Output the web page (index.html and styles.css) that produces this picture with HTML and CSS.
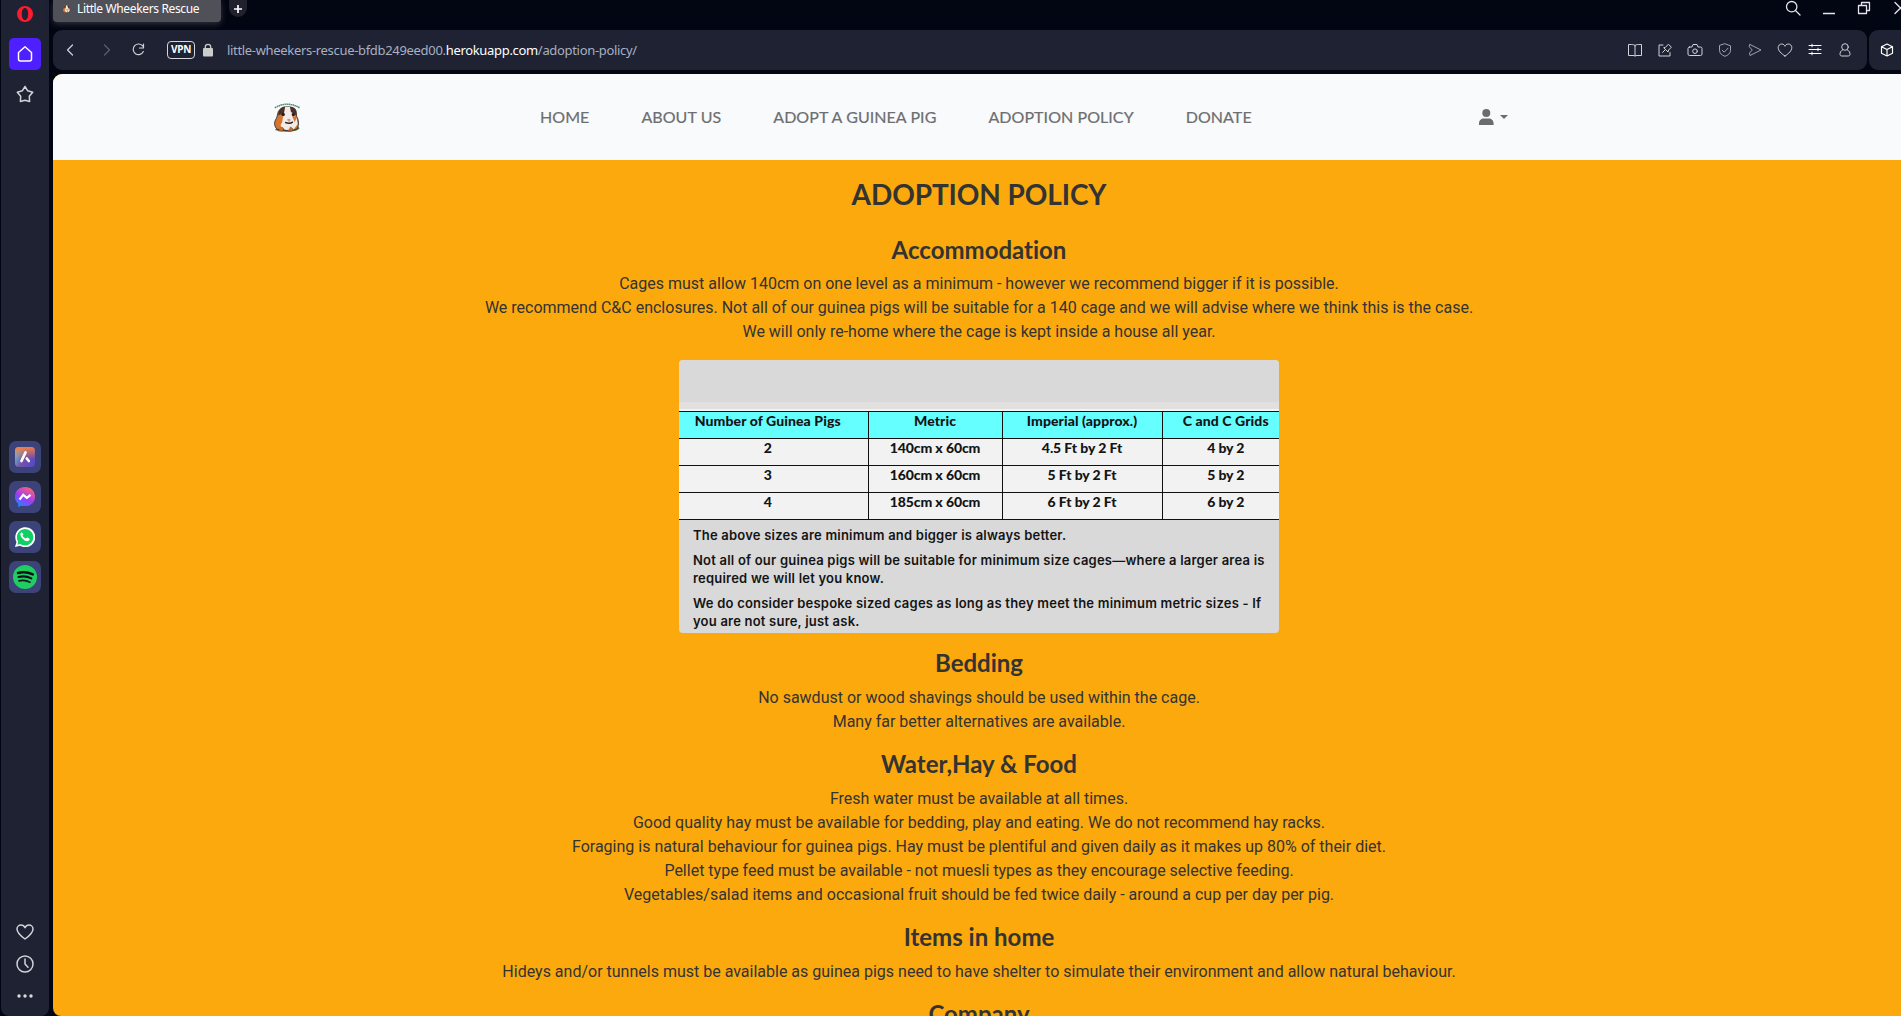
FILE: index.html
```html
<!DOCTYPE html>
<html lang="en">
<head>
<meta charset="utf-8">
<title>Little Wheekers Rescue</title>
<link rel="stylesheet" href="styles.css">
</head>
<body>
<svg class="defs" width="0" height="0">
  <defs>
    <linearGradient id="aria" x1="0" y1="0.3" x2="1" y2="0.8"><stop offset="0" stop-color="#62c4dc"/><stop offset=".45" stop-color="#7553a5"/><stop offset="1" stop-color="#5548c8"/></linearGradient>
    <linearGradient id="ariaTop" x1="0" y1="0" x2="0" y2="1"><stop offset="0" stop-color="#f47b45"/><stop offset=".6" stop-color="#f47b45" stop-opacity="0"/></linearGradient>
    <linearGradient id="msg" x1="0.2" y1="1" x2="0.75" y2="0"><stop offset="0" stop-color="#168bff"/><stop offset=".45" stop-color="#9a3cf5"/><stop offset="1" stop-color="#ff6370"/></linearGradient>
    <symbol id="pig" viewBox="0 0 28 32">
      <path d="M2 28c4-4 8-3 12-2l8-4 5 5c-2 4-18 5-25 2z" fill="#476f43"/>
      <path d="M5 10c-1 3-1 5-2 7-3 4-2 9 1 11 6 2 15 2 20 0 3-4 2-10 0-13-1-3-1-7-4-9-4-2-12-2-15 4z" fill="#cf7636" stroke="#3b2c28" stroke-width=".9"/>
      <path d="M12 5h6l1 7 5 5 1 6-4 5-8 1-5-3-2-7 4-7z" fill="#f1ece8"/>
      <path d="M5 11c1-4 4-6 7-6l-1 6-6 3zM17 5c5 0 8 3 7 9l-6-4z" fill="#4a3129"/>
      <path d="m6 14 4 1-1 6-3 5-3-4zM19 14l5 2-2 5z" fill="#d9752e"/>
      <circle cx="10" cy="13" r="1.800" fill="#211e21"/><circle cx="20.500" cy="13" r="1.600" fill="#211e21"/>
      <path d="M14 18q2-1.500 4 0l-1 2h-2z" fill="#c99b92"/>
      <path d="M12 21q5 2 8-.5" fill="none" stroke="#292326" stroke-width="1.400"/>
      <path d="M8 26c3 0 3 3 1 4H5M17 26c3 0 4 3 2 4h-4" fill="#c96b31" stroke="#55352a" stroke-width=".5"/>
      <path d="M1.500 6Q14-1.500 27 6" fill="none" stroke="#438567" stroke-width="1.600" stroke-dasharray="1.500 .6"/>
    </symbol>
  </defs>
</svg>
<div class="browser">
  <aside class="sidebar">
    <svg class="opera" width="18" height="18" viewBox="0 0 18 18"><path fill-rule="evenodd" d="M9 1a8 8 0 1 0 0 16A8 8 0 0 0 9 1zm0 2c2 0 3.200 2.600 3.200 6S11 15 9 15 5.800 12.400 5.800 9 7 3 9 3z" fill="#ff1b2d"/></svg>
    <div class="home"><svg class="line" width="18" height="18" viewBox="0 0 18 18"><path d="M2.500 7.500 9 1.800l6.500 5.700v6.500a2 2 0 0 1-2 2h-9a2 2 0 0 1-2-2z"/></svg></div>
    <svg class="line star" width="20" height="20" viewBox="0 0 20 20"><path d="m10 2.500 2.700 4.300 5 1.500-3.400 4 .3 5.200-4.600-1.200-4.600 1.200.3-5.200-3.400-4 5-1.500z"/></svg>
    <div class="apps">
      <div class="app"><svg width="20" height="20" viewBox="0 0 20 20"><rect width="20" height="20" rx="4" fill="url(#aria)"/><rect width="20" height="20" rx="4" fill="url(#ariaTop)"/><path d="m10.500 5.500-4 8.500M11.800 11.500l2 2.500" fill="none" stroke="#fff" stroke-width="2.700" stroke-linecap="round"/></svg></div>
      <div class="app"><svg width="20" height="20" viewBox="0 0 20 20"><path d="M10 0C4 0 0 4 0 9.700c0 3 1.200 5.500 3.200 7.100v3.200l3.100-1.300C15 20.500 20 15.800 20 9.700 20 4 16 0 10 0z" fill="url(#msg)"/><path d="m4.500 12.700 3.700-4.800 3.600 3 3.800-3" fill="none" stroke="#fff" stroke-width="2.200"/></svg></div>
      <div class="app"><svg width="20" height="20" viewBox="0 0 20 20"><path d="m0 20 1.500-5A10 10 0 1 1 5 18.700z" fill="#fff"/><path d="m2.300 17.700.9-3A8.200 8.200 0 1 1 5.300 16.900z" fill="#10cf64"/><path d="M6.700 5.200c-2 1-1.800 3.200.3 5.700 2.500 3 5.500 4.300 7.300 2.300.7-.9.500-1.400-.5-1.900l-1.400-.7c-.7-.3-.9.900-1.700 1-1-.2-2.900-1.900-3.200-3 0-.7 1.200-.9.800-1.700z" fill="#fff"/></svg></div>
      <div class="app"><svg width="24" height="24" viewBox="0 0 24 24"><circle cx="12" cy="12" r="12" fill="#20cd60"/><g fill="none" stroke="#101318" stroke-linecap="round"><path d="M5 8c5-1.500 10-1 14.800 1.400" stroke-width="2.500"/><path d="M5.500 12c4.500-1.200 8.800-.8 12.800 1.400" stroke-width="2.100"/><path d="M6 15.800c4-.8 7.500-.5 11 1.400" stroke-width="1.700"/></g></svg></div>
    </div>
    <svg class="line heart" width="20" height="18" viewBox="0 0 20 18"><path d="M10 16C5 12.500 2 9.500 2 6a4 4 0 0 1 4-4c1.800 0 3.200 1 4 2.800C10.800 3 12.200 2 14 2a4 4 0 0 1 4 4c0 3.500-3 6.500-8 10z"/></svg>
    <svg class="line clock" width="20" height="20" viewBox="0 0 20 20"><circle cx="10" cy="10" r="8"/><path d="M10 5v5l3 3.300"/></svg>
    <svg class="dots" width="18" height="4" viewBox="0 0 18 4"><circle cx="3" cy="2" r="1.700"/><circle cx="9" cy="2" r="1.700"/><circle cx="15" cy="2" r="1.700"/></svg>
  </aside>
  <div class="window">
    <div class="tabs">
      <div class="tab"><svg width="9" height="9"><use href="#pig"/></svg><span>Little Wheekers Rescue</span></div>
      <div class="new-tab"><svg width="8" height="8" viewBox="0 0 8 8"><path d="M4 0v8M0 4h8" stroke="#fff" stroke-width="1.700"/></svg></div>
      <div class="controls">
        <svg class="line" width="16" height="16" viewBox="0 0 16 16"><circle cx="6.700" cy="6.700" r="5.200"/><path d="m10.500 10.500 4.500 4.500"/></svg>
        <svg class="line" width="12" height="16" viewBox="0 0 12 16"><path d="M0 13.500h12"/></svg>
        <svg class="line" width="14" height="16" viewBox="0 0 14 16"><path d="M1.500 5.500h8v8h-8zM4.500 5V2.500h8v8H10"/></svg>
        <svg class="line" width="14" height="16" viewBox="0 0 14 16"><path d="m2 2.500 11 11M13 2.500l-11 11"/></svg>
      </div>
    </div>
    <div class="toolbar">
      <div class="address">
        <svg class="line back" width="8" height="14" viewBox="0 0 8 14"><path d="M6.500 2 1.500 7l5 5"/></svg>
        <svg class="line forward" width="8" height="14" viewBox="0 0 8 14"><path d="m1.500 2 5 5-5 5"/></svg>
        <svg class="line reload" width="14" height="14" viewBox="0 0 14 14"><path d="M11.800 3.200A5.300 5.300 0 1 0 12.300 8.500M12.500 1v4h-4"/></svg>
        <span class="vpn">VPN</span>
        <svg class="lock" width="10" height="14" viewBox="0 0 10 14"><rect y="5" width="10" height="8.500" rx="1" fill="#cbcdca"/><path d="M2.300 6V4a2.700 2.700 0 0 1 5.400 0v2" fill="none" stroke="#cbcdca" stroke-width="1.300"/></svg>
        <span class="url">little-wheekers-rescue-bfdb249eed00.<b>herokuapp.com</b>/adoption-policy/</span>
        <div class="tools">
          <svg class="line" width="16" height="16" viewBox="0 0 16 16"><path d="M8 3.500C7 2.500 6 2.500 1.500 2.500v11H6c1 0 1.500 0 2 .7.500-.7 1-.7 2-.7h4.500v-11C10 2.500 9 2.500 8 3.500zm0 0v10.500"/></svg>
          <svg class="line" width="16" height="16" viewBox="0 0 16 16"><path d="M6 3H2v11h11v-3.500M5.500 10.500 8.500 7.500M7 6l4 4 .6-2 2.800-2.800-3-3L8.700 5z"/></svg>
          <svg class="line" width="16" height="16" viewBox="0 0 16 16"><path d="M2.500 5H5l1-2.500h4L11 5h2.500a1.500 1.500 0 0 1 1.500 1.500V12a1.500 1.500 0 0 1-1.500 1.500h-11A1.500 1.500 0 0 1 1 12V6.500A1.500 1.500 0 0 1 2.500 5z"/><circle cx="8" cy="9.200" r="2.300"/></svg>
          <svg class="line dim" width="16" height="16" viewBox="0 0 16 16"><path d="m8 1.800 5.500 2v4.500c0 3-2.500 5-5.500 6-3-1-5.500-3-5.500-6V3.800zM5.200 8.200l2 2 3.800-4"/></svg>
          <svg class="line dim" width="16" height="16" viewBox="0 0 16 16"><path d="M3 2.500 14 8 3 13.500 2.500 11l2.800-3-2.800-3z"/></svg>
          <svg class="line" width="16" height="16" viewBox="0 0 16 16"><path d="M8 14C4 11.500 1.200 8.500 1.200 5.700A3.500 3.500 0 0 1 4.700 2C6.500 2 7.500 3 8 4.300 8.500 3 9.500 2 11.300 2a3.500 3.500 0 0 1 3.500 3.700C14.800 8.500 12 11.500 8 14z"/></svg>
          <svg class="line bright" width="16" height="16" viewBox="0 0 16 16"><path d="M2 3.500h12M2 7.500h12M2 11.500h12M5 2.200v2.600M11 6.200v2.600M5 10.200v2.600"/></svg>
          <svg class="line" width="16" height="16" viewBox="0 0 16 16"><circle cx="8" cy="5" r="3.300"/><path d="M5.500 8C3.500 9 3 10.500 3 12.500c0 1 .8 1.500 2 1.500h6c1.200 0 2-.5 2-1.500 0-2-.5-3.500-2.500-4.500"/></svg>
        </div>
      </div>
      <div class="cube"><svg class="line bright" width="16" height="16" viewBox="0 0 16 16"><path d="m8 2 5.500 2.700v6.600L8 14l-5.500-2.700V4.700zM2.500 4.700 8 7.500l5.500-2.800M8 7.500V14"/></svg></div>
    </div>
    <div class="page">
      <header>
        <svg class="logo" width="28" height="31"><use href="#pig"/></svg>
        <nav><a>Home</a><a>About us</a><a>Adopt a guinea pig</a><a>Adoption Policy</a><a>Donate</a></nav>
        <svg class="account" width="30" height="16" viewBox="0 0 30 16"><circle cx="7.300" cy="4" r="4"/><path d="M0 16v-1.500c0-3 2-5 5-5h4.600c3 0 5 2 5 5V16zM21 6h8l-4 4z"/></svg>
      </header>
      <main>
        <h1>ADOPTION POLICY</h1>
        <h2>Accommodation</h2>
        <p>Cages must allow 140cm on one level as a minimum - however we recommend bigger if it is possible.<br>We recommend C&amp;C enclosures. Not all of our guinea pigs will be suitable for a 140 cage and we will advise where we think this is the case.<br>We will only re-home where the cage is kept inside a house all year.</p>
        <section class="sizes">
          <div class="band"></div>
          <table>
            <colgroup><col class="c1"><col class="c2"><col class="c3"><col class="c4"></colgroup>
            <tr><th>Number of Guinea Pigs</th><th>Metric</th><th>Imperial (approx.)</th><th>C and C Grids</th></tr>
            <tr><td>2</td><td>140cm x 60cm</td><td>4.5 Ft by 2 Ft</td><td>4 by 2</td></tr>
            <tr><td>3</td><td>160cm x 60cm</td><td>5 Ft by 2 Ft</td><td>5 by 2</td></tr>
            <tr><td>4</td><td>185cm x 60cm</td><td>6 Ft by 2 Ft</td><td>6 by 2</td></tr>
          </table>
          <div class="notes">
            <div>The above sizes are minimum and bigger is always better.</div>
            <div>Not all of our guinea pigs will be suitable for minimum size cages—where a larger area is<br>required we will let you know.</div>
            <div>We do consider bespoke sized cages as long as they meet the minimum metric sizes - If<br>you are not sure, just ask.</div>
          </div>
        </section>
        <h2>Bedding</h2>
        <p>No sawdust or wood shavings should be used within the cage.<br>Many far better alternatives are available.</p>
        <h2>Water,Hay &amp; Food</h2>
        <p>Fresh water must be available at all times.<br>Good quality hay must be available for bedding, play and eating. We do not recommend hay racks.<br>Foraging is natural behaviour for guinea pigs. Hay must be plentiful and given daily as it makes up 80% of their diet.<br>Pellet type feed must be available - not muesli types as they encourage selective feeding.<br>Vegetables/salad items and occasional fruit should be fed twice daily - around a cup per day per pig.</p>
        <h2>Items in home</h2>
        <p>Hideys and/or tunnels must be available as guinea pigs need to have shelter to simulate their environment and allow natural behaviour.</p>
        <h2>Company</h2>
      </main>
    </div>
  </div>
</div>
</body>
</html>
```

FILE: styles.css
```css
* { box-sizing: border-box; }
body { margin: 0; overflow: hidden; background: #020512; }
svg { display: block; flex: none; }
.defs { position: absolute; }
.browser { display: flex; width: 1901px; height: 1016px; overflow: hidden; }
.line { fill: none; stroke: #d0d3d8; stroke-width: 1.2; stroke-linejoin: round; stroke-linecap: round; }
.dim { stroke: #a1a4ab; }
.bright { stroke: #fff; }

.sidebar { flex: none; width: 48px; margin-left: 1px; padding-bottom: 18px; background: #1e2233; display: flex; flex-direction: column; align-items: center; border-radius: 0 0 8px 8px; }
.opera { margin-top: 5px; }
.home { width: 32px; height: 32px; margin-top: 15px; border-radius: 5px; background: #4e1fff; display: grid; place-items: center; }
.home .line { stroke: #fff; }
.star { margin-top: 14px; }
.sidebar .line { stroke-width: 1.5; }
.apps { margin-top: 337px; display: grid; gap: 8px; }
.app { width: 32px; height: 32px; border-radius: 7px; background: #3b4379; display: grid; place-items: center; }
.heart { margin-top: auto; }
.clock { margin-top: 13px; }
.dots { margin-top: 20px; fill: #d9dbe0; }

.window { flex: 1; min-width: 0; margin-left: 4px; display: flex; flex-direction: column; font-family: "Noto Sans", sans-serif; }
.tabs { height: 30px; flex: none; display: flex; align-items: flex-start; }
.tab { width: 168px; height: 22px; padding: 0 9px 6px 9px; display: flex; align-items: center; gap: 6px; background: #505059; border-radius: 0 0 4px 4px; color: #fff; font-size: 12px; letter-spacing: -.36px; white-space: nowrap; box-shadow: 0 2px 6px #30323b; }
.new-tab { width: 18px; height: 17px; margin-left: 8px; border-radius: 0 0 9px 9px; background: #20212c; display: grid; place-items: center; }
.controls { margin-left: auto; display: flex; }
.controls svg { margin-right: 22px; stroke: #e4e5e8; stroke-width: 1.3; }
.controls svg:last-child { margin-right: -6px; }
.toolbar { flex: none; height: 40px; display: flex; gap: 2px; }
.address { flex: 1; background: #1e2233; border-radius: 9px; display: flex; align-items: center; padding: 0 13px; }
.address .forward { margin-left: 29px; opacity: .35; }
.reload { margin-left: 20px; }
.vpn { width: 28px; height: 18px; margin-left: 22px; border: 1.5px solid #d4d7dc; border-radius: 4px; color: #fff; font-weight: 700; font-size: 10px; line-height: 15px; text-align: center; letter-spacing: -.3px; }
.lock { margin-left: 8px; }
.url { margin-left: 14px; color: #a8b0c1; font-size: 13px; letter-spacing: -.32px; white-space: nowrap; }
.url b { color: #fff; font-weight: 400; }
.tools { margin-left: auto; display: flex; gap: 14px; padding-right: 1px; }
.tools svg { stroke-width: 1; }
.cube { width: 32px; background: #1e2233; border-radius: 9px 0 0 9px; display: grid; place-items: center start; padding-left: 10px; }

.page { flex: 1; min-height: 0; margin-top: 4px; overflow: hidden; border-radius: 9px 0 0 8px; background: #fba90d; color: #333; }
header { height: 86px; background: #f8fafc; display: flex; align-items: center; }
.logo { margin-left: 220px; }
nav { margin-left: 239px; display: flex; gap: 52px; font: 400 16px/24px Lato, sans-serif; letter-spacing: .07px; text-transform: uppercase; color: #6d6e70; -webkit-text-stroke: .2px #6d6e70; white-space: nowrap; }
.account { margin-left: auto; margin-right: 392px; fill: #6c6c6c; }
main { padding: 18px 0 0 4px; text-align: center; font: 400 16px/24px Roboto, sans-serif; }
h1, h2 { margin: 0 0 8px; font-family: Lato, sans-serif; font-weight: 700; line-height: 1.2; font-variant-ligatures: none; }
h1 { font-size: 28px; margin-bottom: 24px; letter-spacing: -.1px; }
h2 { font-size: 24px; }
p { margin: 0 0 16px; }

.sizes { width: 600px; height: 273px; margin: 0 auto 16px; overflow: hidden; border-radius: 4px; background: #d9d9d9; color: #141414; }
.band { height: 51px; background: linear-gradient(#d9d9d9 42px, #e2dfdf 42px, #e2dfdf 49px, #f3f3f3 49px); }
table { width: 600px; table-layout: fixed; border-collapse: collapse; font: 900 14px/18px Lato, sans-serif; border-top: 1px solid #111; border-bottom: 1px solid #111; }
.c1 { width: 189px; }
.c2 { width: 134px; }
.c3 { width: 160px; }
.c4 { width: 117px; }
tr { height: 27px; background: #f2f2f2; border-bottom: 1px solid #111; }
tr:first-child { background: #65ffff; }
th, td { padding: 0 0 8px; font-weight: inherit; vertical-align: middle; border-right: 1px solid #111; white-space: nowrap; }
th { letter-spacing: .1px; }
td { letter-spacing: -.1px; }
th:first-child, td:first-child { padding-right: 11px; }
th:last-child, td:last-child { border-right: 0; padding-left: 10px; }
.notes { padding: 6px 14px; text-align: left; font: 600 13px/18px Inter, sans-serif; letter-spacing: .21px; white-space: nowrap; }
.notes div { margin-bottom: 7px; }
```
